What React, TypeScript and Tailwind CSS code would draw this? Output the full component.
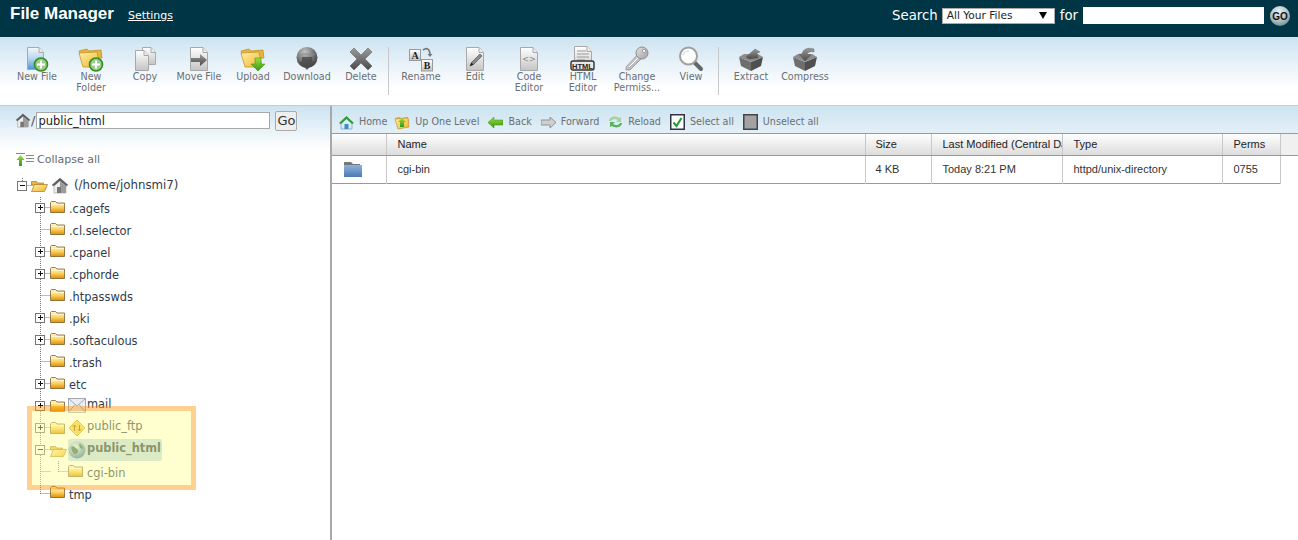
import React from 'react';

const SANS = "font-['DejaVu_Sans',Verdana,sans-serif]";

// Shared gradients for the drawn icons
const IconDefs: React.FC = () => (
  <svg className="absolute h-0 w-0" aria-hidden="true">
    <defs>
      <linearGradient id="folderBody" x1="0" y1="0" x2="0" y2="1">
        <stop offset="0" stopColor="#fff6cc" />
        <stop offset="0.5" stopColor="#fcd668" />
        <stop offset="1" stopColor="#e08e00" />
      </linearGradient>
      <linearGradient id="folderOpen" x1="0" y1="0" x2="1" y2="1">
        <stop offset="0" stopColor="#fff0a8" />
        <stop offset="1" stopColor="#f0b52c" />
      </linearGradient>
      <linearGradient id="blueDoc" x1="0" y1="0" x2="0" y2="1">
        <stop offset="0" stopColor="#f4f8fc" />
        <stop offset="0.5" stopColor="#b9d6f0" />
        <stop offset="1" stopColor="#4b93d6" />
      </linearGradient>
      <linearGradient id="greyDoc" x1="0" y1="0" x2="0" y2="1">
        <stop offset="0" stopColor="#ffffff" />
        <stop offset="1" stopColor="#c4c4c4" />
      </linearGradient>
      <linearGradient id="darkGrey" x1="0" y1="0" x2="0" y2="1">
        <stop offset="0" stopColor="#9a9a9a" />
        <stop offset="1" stopColor="#4a4a4a" />
      </linearGradient>
      <linearGradient id="keyGrey" x1="0" y1="0" x2="1" y2="1">
        <stop offset="0" stopColor="#e4e4e4" />
        <stop offset="1" stopColor="#a0a0a0" />
      </linearGradient>
      <radialGradient id="globeGrey" cx="0.4" cy="0.25" r="0.85">
        <stop offset="0" stopColor="#c4c4c4" />
        <stop offset="0.55" stopColor="#6e6e6e" />
        <stop offset="1" stopColor="#333333" />
      </radialGradient>
      <radialGradient id="globeBlue" cx="0.4" cy="0.3" r="0.8">
        <stop offset="0" stopColor="#d8ecf6" />
        <stop offset="0.6" stopColor="#6f9fc0" />
        <stop offset="1" stopColor="#31658c" />
      </radialGradient>
      <radialGradient id="goBall" cx="0.45" cy="0.3" r="0.8">
        <stop offset="0" stopColor="#eef3f4" />
        <stop offset="0.6" stopColor="#a6bcc2" />
        <stop offset="1" stopColor="#5d7a83" />
      </radialGradient>
      <linearGradient id="greenArrow" x1="0" y1="0" x2="0" y2="1">
        <stop offset="0" stopColor="#a4dc44" />
        <stop offset="1" stopColor="#2f9a12" />
      </linearGradient>
      <linearGradient id="tableFolder" x1="0" y1="0" x2="0" y2="1">
        <stop offset="0" stopColor="#8fb2dc" />
        <stop offset="1" stopColor="#4d79b3" />
      </linearGradient>
    </defs>
  </svg>
);

const PlusBadge: React.FC<{ cx: number; cy: number }> = ({ cx, cy }) => (
  <g>
    <circle cx={cx} cy={cy} r="6.5" fill="#9acb8a" stroke="#2f8f1e" strokeWidth="1.6" />
    <path d={`M${cx - 4} ${cy}h8M${cx} ${cy - 4}v8`} stroke="#fff" strokeWidth="2.2" />
  </g>
);

const DocShape: React.FC<{ x?: number; y?: number; w?: number; h?: number; fill?: string }> = ({
  x = 5,
  y = 1,
  w = 17,
  h = 23,
  fill = 'url(#greyDoc)',
}) => (
  <g>
    <path
      d={`M${x + 0.5} ${y + 0.5}H${x + w - 5}L${x + w - 0.5} ${y + 5.5}V${y + h - 0.5}H${x + 0.5}Z`}
      fill={fill}
      stroke="#a8a8a8"
    />
    <path d={`M${x + w - 5} ${y + 0.5}V${y + 5.5}H${x + w - 0.5}`} fill="#eee" stroke="#a8a8a8" />
  </g>
);

const OpenFolderShape: React.FC = () => (
  <g>
    <path d="M1 5l8-2 2 2 12-1 1 8H4z" fill="#e9b43c" stroke="#b98a1e" strokeWidth=".7" />
    <path d="M1 7l18-1 3 15H5z" fill="url(#folderOpen)" stroke="#c4962a" strokeWidth=".8" />
  </g>
);

const toolbarIcons: Record<string, React.ReactNode> = {
  newFile: (
    <svg width="26" height="26" viewBox="0 0 26 26">
      <DocShape x={3} fill="url(#blueDoc)" />
      <PlusBadge cx={17} cy={18.5} />
    </svg>
  ),
  newFolder: (
    <svg width="26" height="26" viewBox="0 0 26 26">
      <OpenFolderShape />
      <PlusBadge cx={18} cy={18.5} />
    </svg>
  ),
  copy: (
    <svg width="26" height="26" viewBox="0 0 26 26">
      <DocShape x={10} y={1} w={14} h={18} />
      <DocShape x={3} y={4} w={14} h={21} />
    </svg>
  ),
  moveFile: (
    <svg width="26" height="26" viewBox="0 0 26 26">
      <DocShape x={4} y={1} w={18} h={24} />
      <path d="M5 12h9V8l7 6-7 6v-4H5z" fill="url(#darkGrey)" />
    </svg>
  ),
  upload: (
    <svg width="26" height="26" viewBox="0 0 26 26">
      <OpenFolderShape />
      <path d="M15 12h6v6h4l-7 7-7-7h4z" fill="url(#greenArrow)" stroke="#2c8a10" strokeWidth=".5" />
    </svg>
  ),
  download: (
    <svg width="26" height="26" viewBox="0 0 26 26">
      <circle cx="13" cy="11.500" r="10.500" fill="url(#globeGrey)" />
      <path d="M8 11h10v5h3l-8 8-8-8h3z" fill="#4a4a4a" opacity=".8" />
      <path d="M4 8c3 2 6-1 9 0s5 2 8 0" stroke="#8c8c8c" fill="none" />
    </svg>
  ),
  delete: (
    <svg width="26" height="26" viewBox="0 0 26 26">
      <path
        d="M2 6l4-4 7 7 7-7 4 4-7 7 7 7-4 4-7-7-7 7-4-4 7-7z"
        fill="url(#darkGrey)"
        stroke="#666"
        strokeWidth=".6"
      />
    </svg>
  ),
  rename: (
    <svg width="26" height="26" viewBox="0 0 26 26">
      <rect x="1.5" y="3.5" width="11" height="11" fill="url(#greyDoc)" stroke="#999" />
      <text x="7" y="12.5" textAnchor="middle" className="font-['Liberation_Serif',serif] text-[10px] font-bold" fill="#222">
        A
      </text>
      <rect x="13.5" y="13.5" width="11" height="11.5" fill="url(#greyDoc)" stroke="#999" />
      <text x="19" y="23" textAnchor="middle" className="font-['Liberation_Serif',serif] text-[10px] font-bold" fill="#222">
        B
      </text>
      <path d="M15 4c4-3 7-1 7 5" stroke="#777" strokeWidth="1.6" fill="none" />
      <path d="M19.5 8h5l-2.500 3z" fill="#777" />
    </svg>
  ),
  edit: (
    <svg width="26" height="26" viewBox="0 0 26 26">
      <DocShape x={4} y={1} w={18} h={24} />
      <path d="M8 20l1.500-3.500L18 8l2 2-8.500 8.500z" fill="#8a8a8a" stroke="#444" strokeWidth=".6" />
      <path d="M8 20l1.500-3.500 2 2z" fill="#222" />
    </svg>
  ),
  codeEditor: (
    <svg width="26" height="26" viewBox="0 0 26 26">
      <DocShape x={4} y={1} w={18} h={24} />
      <text x="13" y="16" textAnchor="middle" className="font-['DejaVu_Sans',sans-serif] text-[8px]" fill="#888">
        {'<>'}
      </text>
    </svg>
  ),
  htmlEditor: (
    <svg width="26" height="26" viewBox="0 0 26 26">
      <DocShape x={4} y={0} w={18} h={24} />
      <path d="M7 5h9M7 8h12M7 11h12M7 14h8" stroke="#999" />
      <rect x="1" y="15" width="23" height="9" rx="2" fill="#e8e8e8" stroke="#333" strokeWidth="1.400" />
      <text x="12.500" y="22.500" textAnchor="middle" className="font-['Liberation_Sans',sans-serif] text-[7.5px] font-bold" fill="#222">
        HTML
      </text>
    </svg>
  ),
  permissions: (
    <svg width="26" height="26" viewBox="0 0 26 26">
      <path d="M2 24l0-3L13 9l4 4L6 24z" fill="url(#keyGrey)" stroke="#8c8c8c" strokeWidth=".7" />
      <circle cx="18" cy="7" r="6" fill="url(#keyGrey)" stroke="#8c8c8c" />
      <circle cx="20" cy="5" r="1.600" fill="#fff" stroke="#777" strokeWidth=".6" />
      <path d="M5 21l9-9" stroke="#fff" />
    </svg>
  ),
  view: (
    <svg width="26" height="26" viewBox="0 0 26 26">
      <path d="M16 16l7 7" stroke="#666" strokeWidth="4" strokeLinecap="round" />
      <circle cx="10.500" cy="10" r="8.500" fill="#fff" stroke="#a0a0a0" strokeWidth="2" />
      <path d="M5 9c1-3 3-4 6-4" stroke="#ccc" fill="none" />
    </svg>
  ),
  extract: (
    <svg width="26" height="26" viewBox="0 0 26 26">
      <path d="M1 11l12 5v9L3 20z" fill="#6e6e6e" />
      <path d="M25 11l-12 5v9l10-5z" fill="#4f4f4f" />
      <path d="M1 11l5-3 14 0 5 3-12 5z" fill="#8c8c8c" />
      <path d="M8 11l9-8 5 3-3 1 1 5-9 1z" fill="url(#darkGrey)" stroke="#555" strokeWidth=".4" />
    </svg>
  ),
  compress: (
    <svg width="26" height="26" viewBox="0 0 26 26">
      <path d="M1 11l12 5v9L3 20z" fill="#6e6e6e" />
      <path d="M25 11l-12 5v9l10-5z" fill="#4f4f4f" />
      <path d="M1 11l5-3 14 0 5 3-12 5z" fill="#8c8c8c" />
      <path d="M22 3c-6-2-11 0-12 5l-3 0 6 7 6-6-4-1c1-2 4-3 7-2z" fill="url(#darkGrey)" stroke="#555" strokeWidth=".4" />
    </svg>
  ),
};

type ToolItem = { key: string; lines: string[] };

const toolGroups: ToolItem[][] = [
  [
    { key: 'newFile', lines: ['New File'] },
    { key: 'newFolder', lines: ['New', 'Folder'] },
    { key: 'copy', lines: ['Copy'] },
    { key: 'moveFile', lines: ['Move File'] },
    { key: 'upload', lines: ['Upload'] },
    { key: 'download', lines: ['Download'] },
    { key: 'delete', lines: ['Delete'] },
  ],
  [
    { key: 'rename', lines: ['Rename'] },
    { key: 'edit', lines: ['Edit'] },
    { key: 'codeEditor', lines: ['Code', 'Editor'] },
    { key: 'htmlEditor', lines: ['HTML', 'Editor'] },
    { key: 'permissions', lines: ['Change', 'Permiss...'] },
    { key: 'view', lines: ['View'] },
  ],
  [
    { key: 'extract', lines: ['Extract'] },
    { key: 'compress', lines: ['Compress'] },
  ],
];

const Toolbar: React.FC = () => (
  <div className="flex h-[69px] border-b border-[#c3ccd2] bg-gradient-to-b from-[#cde3f1] via-white via-[75%] to-white pl-[10px] pt-[9px]">
    {toolGroups.map((group, i) => (
      <React.Fragment key={i}>
        {i > 0 && <div className="mr-[5px] mt-px h-[48px] w-px bg-[#c8c8c8]" />}
        {group.map((item) => (
          <div key={item.key} className="flex w-[54px] flex-col items-center">
            <div className="mb-[-1px] flex h-[26px] w-[26px] items-center justify-center">{toolbarIcons[item.key]}</div>
            {item.lines.map((line) => (
              <span key={line} className="whitespace-nowrap text-[9.6px] leading-[11px] text-[#6a6f73]">
                {line}
              </span>
            ))}
          </div>
        ))}
      </React.Fragment>
    ))}
  </div>
);

const Header: React.FC = () => (
  <div className="flex h-[37px] items-start bg-[#003545] pl-[10px] pr-[8px] text-white">
    <span className="mt-[4px] font-['Liberation_Sans',Arial,sans-serif] text-[17px] font-bold leading-[20px]">File Manager</span>
    <a className="ml-[14px] mt-[9px] text-[11px] leading-[14px] underline">Settings</a>
    <div className="ml-auto mt-[6px] flex items-start">
      <span className="mt-[2px] text-[13.3px] leading-[16px]">Search</span>
      <div className="relative ml-[4px] mt-[2px] flex h-[16px] w-[113px] items-center border border-[#aaa] bg-white pl-[4px] text-[10.6px] text-[#222]">
        All Your Files
        <span className="absolute right-[7px] top-[3px] h-0 w-0 border-x-[4px] border-t-[7px] border-x-transparent border-t-black" />
      </div>
      <span className="ml-[5px] mt-[2px] text-[13.3px] leading-[16px]">for</span>
      <div className="ml-[5px] mt-px h-[17px] w-[181px] bg-white" />
      <svg className="ml-[6px]" width="20" height="20" viewBox="0 0 20 20">
        <circle cx="10" cy="10" r="10" fill="url(#goBall)" />
        <text x="10" y="13.500" textAnchor="middle" className="font-['Liberation_Sans',sans-serif] text-[10px] font-bold" fill="#111">
          GO
        </text>
      </svg>
    </div>
  </div>
);

const HouseIcon: React.FC<{ size?: number }> = ({ size = 18 }) => (
  <svg width={size} height={size} viewBox="0 0 18 18">
    <path d="M1 9l8-7 8 7-2 1v7H3v-7z" fill="#eee" stroke="#999" strokeWidth=".6" />
    <path d="M1 9l8-7 8 7-2 1-6-5-6 5z" fill="#5e5e5e" />
    <path d="M9 5l6 5v7H9z" fill="#9c9c9c" />
    <rect x="6" y="11" width="4" height="6" fill="#777" />
  </svg>
);

const PathBar: React.FC = () => (
  <div className="flex h-[44px] items-start bg-gradient-to-b from-[#cde3f1] to-white pl-[15px] pt-[5px]">
    <div className="mt-[1px]">
      <HouseIcon size={16} />
    </div>
    <span className="mt-[1px] text-[13px] leading-[17px] text-[#555]">/</span>
    <div className="ml-[1px] mt-[1px] flex h-[17px] w-[234px] items-center border border-[#a9a9a9] bg-white pl-[1px] pt-[2px] text-[11.5px] text-[#222]">
      public_html
    </div>
    <div className="ml-[5px] flex h-[20px] w-[22px] items-center justify-center rounded-[2px] border border-[#aaa] bg-[#eeeeee] text-[13px] text-[#333]">
      Go
    </div>
  </div>
);

const FolderIcon: React.FC<{ open?: boolean }> = ({ open }) =>
  open ? (
    <svg width="17" height="13" viewBox="0 0 17 13">
      <path d="M.5 2.500h5l1 1.500h6v2H.5z" fill="#e7b64a" stroke="#a77b1e" strokeWidth=".7" />
      <path d="M.5 12.500l3-7h13l-3 7z" fill="url(#folderOpen)" stroke="#a77b1e" strokeWidth=".7" />
    </svg>
  ) : (
    <svg width="15" height="12" viewBox="0 0 15 12">
      <path d="M.5 1.500l1-1h4l1.500 1.500h7.500v9.500H.5z" fill="url(#folderBody)" stroke="#7d6030" strokeWidth=".8" />
      <path d="M1 3.500h13" stroke="#fff6cc" />
    </svg>
  );

// Dotted tree line plus the optional +/- box
const Connector: React.FC<{ toggle?: '+' | '-'; last?: boolean; first?: boolean; x?: number }> = ({
  toggle,
  last,
  first,
  x = 11,
}) => (
  <svg width="22" height="22" viewBox="0 0 22 22" className="shrink-0">
    <path
      d={`M${x + 0.5} ${first ? 3 : 0}V${last ? 11 : 22}M${x + 0.5} 10.500H22`}
      stroke="#777"
      strokeDasharray="1 1"
      fill="none"
    />
    {toggle && (
      <g>
        <rect x={x - 4.5} y="6.500" width="9" height="9" fill="#fff" stroke="#777" />
        <path d={`M${x - 2} 10.500h5${toggle === '+' ? `M${x + 0.5} 8v5` : ''}`} stroke="#111" />
      </g>
    )}
  </svg>
);

const MailIcon = () => (
  <svg width="18" height="17" viewBox="0 0 18 17" className="shrink-0">
    <rect x=".5" y="1.500" width="17" height="14" fill="#e8eef6" stroke="#a4a9b4" />
    <path d="M.5 1.500L9 9l8.500-7.500M.5 15.500L7 7.500M17.500 15.500L11 7.500" stroke="#a4a9b4" fill="none" />
  </svg>
);

const FtpIcon = () => (
  <svg width="18" height="18" viewBox="0 0 18 18" className="shrink-0">
    <path d="M9 1l8 8-8 8-8-8z" fill="#f7c93a" stroke="#d8a21e" />
    <path d="M6.500 12V6M4.800 7.800L6.500 6l1.700 1.800M11.500 6v6M9.800 10.200l1.700 1.800 1.700-1.800" stroke="#8a5a10" fill="none" />
  </svg>
);

const GlobeIcon = () => (
  <svg width="18" height="18" viewBox="0 0 18 18" className="shrink-0">
    <circle cx="9" cy="9" r="8.500" fill="url(#globeBlue)" />
    <path d="M3 6c3-2 4 1 6 2s1 4-1 5-4-2-5-7zM11 3c2 0 4 2 4 5-2 0-4-2-4-5z" fill="#3f6a55" />
  </svg>
);

type TreeRow = {
  label: string;
  toggle?: '+';
};

const topRows: TreeRow[] = [
  { label: '.cagefs', toggle: '+' },
  { label: '.cl.selector' },
  { label: '.cpanel', toggle: '+' },
  { label: '.cphorde', toggle: '+' },
  { label: '.htpasswds' },
  { label: '.pki', toggle: '+' },
  { label: '.softaculous', toggle: '+' },
  { label: '.trash' },
  { label: 'etc', toggle: '+' },
];

const TREE_TEXT = 'text-[11.4px] leading-[22px] text-[#2f3b4a] whitespace-nowrap';

const Tree: React.FC = () => (
  <div className="relative ml-[29px]">
    {/* Root row */}
    <div className="flex h-[22px] items-center -ml-[18px]">
      <Connector toggle="-" first last />
      <div className="-ml-[2px] mr-[3px] mt-[-2px] flex">
        <FolderIcon open />
      </div>
      <div className="mr-[5px] mt-[-2px]">
        <HouseIcon />
      </div>
      <span className="-mt-[3px] whitespace-nowrap text-[11.8px] leading-[22px] text-[#2f3b4a]">(/home/johnsmi7)</span>
    </div>

    {topRows.map((row) => (
      <div key={row.label} className="flex h-[22px] items-center">
        <Connector toggle={row.toggle} />
        <div className="mr-[3px] mt-[-2px] -ml-px flex">
          <FolderIcon />
        </div>
        <span className={`ml-px mt-[2px] ${TREE_TEXT}`}>{row.label}</span>
      </div>
    ))}

    {/* Rows with a service icon sit their label a little higher */}
    <div className="flex h-[22px] items-center">
      <Connector toggle="+" />
      <div className="-ml-px mr-[3px] flex">
        <FolderIcon />
      </div>
      <div className="-mt-px">
        <MailIcon />
      </div>
      <span className={`ml-px -mt-[4px] ${TREE_TEXT}`}>mail</span>
    </div>
    <div className="flex h-[22px] items-center">
      <Connector toggle="+" />
      <div className="-ml-px mr-[3px] flex">
        <FolderIcon />
      </div>
      <FtpIcon />
      <span className={`ml-px -mt-[5px] ${TREE_TEXT}`}>public_ftp</span>
    </div>
    <div className="flex h-[22px] items-center">
      <Connector toggle="-" />
      <div className="-ml-px mr-[1px] flex">
        <FolderIcon open />
      </div>
      <div className="flex h-[22px] items-center rounded-[2px] bg-[#bfdbec] pr-px">
        <GlobeIcon />
        <span className={`ml-px -mt-[5px] font-bold ${TREE_TEXT}`}>public_html</span>
      </div>
    </div>
    <div className="flex h-[22px] items-center">
      <Connector />
      <Connector last x={7} />
      <div className="-ml-[5px] mr-[3px] mt-[-2px] flex">
        <FolderIcon />
      </div>
      <span className={`ml-px mt-[2px] ${TREE_TEXT}`}>cgi-bin</span>
    </div>
    <div className="flex h-[22px] items-center">
      <Connector last />
      <div className="-ml-px mr-[3px] mt-[-4px] flex">
        <FolderIcon />
      </div>
      <span className={`ml-px mt-[1px] ${TREE_TEXT}`}>tmp</span>
    </div>

    {/* Tutorial highlight lying over the tree */}
    <div className="absolute left-[-2px] top-[231px] h-[84px] w-[169px] border-[5px] border-[#ff9707]/45 bg-[#ffff96]/45 bg-clip-padding" />
  </div>
);

const LeftPanel: React.FC = () => (
  <div className="w-[332px] shrink-0 border-r-2 border-[#a8a8a8]">
    <PathBar />
    <div className="ml-[16px] mt-px flex h-[18px] items-center">
      <svg width="18" height="14" viewBox="0 0 18 14" className="shrink-0">
        <path d="M0 .5h9M10 5.500h8M10 8.500h8M10 2.500h8" stroke="#888" />
        <path d="M4.500 2l4 5H6v6H3V7H.5z" fill="url(#greenArrow)" />
      </svg>
      <span className="ml-[3px] text-[11px] text-[#666b70]">Collapse all</span>
    </div>
    <div className="h-[6px]" />
    <Tree />
  </div>
);

const navIcons: Record<string, React.ReactNode> = {
  Home: (
    <svg width="15" height="15" viewBox="0 0 15 15">
      <path d="M2 8v6h11V8L7.500 3z" fill="#dcebf6" stroke="#6f8fa8" strokeWidth=".6" />
      <path d="M0 8l7.500-7L15 8l-2 1-5.500-5L2 9z" fill="#2e9a3a" />
      <rect x="5.500" y="9" width="4" height="5" fill="#3d8ccc" />
    </svg>
  ),
  'Up One Level': (
    <svg width="16" height="15" viewBox="0 0 16 15">
      <path d="M1 3l5-1 1 1 7-1 1 5H2z" fill="#e0ad30" />
      <path d="M1 4l13-1 1 9-11 2z" fill="url(#folderOpen)" stroke="#b98a1e" strokeWidth=".6" />
      <path d="M8 3l4 4h-2v5H6V7H4z" fill="url(#greenArrow)" />
    </svg>
  ),
  Back: (
    <svg width="15" height="11" viewBox="0 0 15 11">
      <path d="M0 5.500L6 0v3h9v5H6v3z" fill="url(#greenArrow)" stroke="#3a8a18" strokeWidth=".5" />
    </svg>
  ),
  Forward: (
    <svg width="15" height="11" viewBox="0 0 15 11">
      <path d="M15 5.500L9 0v3H0v5h9v3z" fill="#cfcfcf" stroke="#777" strokeWidth=".7" />
    </svg>
  ),
  Reload: (
    <svg width="15" height="14" viewBox="0 0 15 14">
      <path d="M1 6c0-4 6-6 10-3l2-1v5H8l2-2C7 3 4 4 3 6z" fill="#a9d0a0" />
      <path d="M14 8c0 4-6 6-10 3l-2 1V7h5L5 9c3 2 6 1 7-1z" fill="#58b25c" />
    </svg>
  ),
  'Select all': (
    <svg width="15" height="16" viewBox="0 0 15 16">
      <rect x=".75" y=".75" width="13.500" height="14.500" fill="#fff" stroke="#334" strokeWidth="1.500" />
      <path d="M3.500 8.500l3 3.500 5-8" stroke="#1d9a33" strokeWidth="2" fill="none" />
    </svg>
  ),
  'Unselect all': (
    <svg width="15" height="16" viewBox="0 0 15 16">
      <rect x=".75" y=".75" width="13.500" height="14.500" fill="#a3a3a3" stroke="#444" strokeWidth="1.500" />
    </svg>
  ),
};

const NavBar: React.FC = () => (
  <div className="flex h-[28px] items-start gap-[9px] border-b border-[#999] bg-gradient-to-b from-[#cde3f1] to-[#e4f0f7] pl-[7px] pt-[8px]">
    {Object.entries(navIcons).map(([label, icon]) => (
      <div key={label} className="flex items-center gap-[5px] first:-mr-[2px]">
        <span className="flex h-[16px] items-center">{icon}</span>
        <span className="whitespace-nowrap text-[9.6px] text-[#6a6f73]">{label}</span>
      </div>
    ))}
  </div>
);

const columns = [
  { label: '', width: 'w-[54px]', pad: 'pl-[11px]' },
  { label: 'Name', width: 'w-[479px]', pad: 'pl-[11px]' },
  { label: 'Size', width: 'w-[66px]', pad: 'pl-[10px]' },
  { label: 'Last Modified (Central Daylight Time)', width: 'w-[131px]', pad: 'pl-[11px]' },
  { label: 'Type', width: 'w-[160px]', pad: 'pl-[11px]' },
  { label: 'Perms', width: 'w-[58px]', pad: 'pl-[11px]' },
];

const FileTable: React.FC = () => (
  <div className="font-['Liberation_Sans',Arial,sans-serif] text-[11px] text-[#333]">
    <div className="h-[22px] border-b border-[#999] bg-[#f0f0f0]">
      <table className="w-[948px] table-fixed border-collapse">
        <thead>
          <tr className="h-[21px] bg-gradient-to-b from-white to-[#dcdcdc]">
            {columns.map((col, i) => (
              <th
                key={i}
                className={`${col.width} ${col.pad} overflow-hidden whitespace-nowrap border-r border-[#c8c8c8] text-left font-normal text-[#222]`}
              >
                {col.label}
              </th>
            ))}
          </tr>
        </thead>
      </table>
    </div>
    <table className="w-[948px] table-fixed border-collapse border-b border-[#999]">
      <tbody>
        <tr className="h-[27px]">
          <td className="w-[54px] border-r border-[#c8c8c8] pl-[12px]">
            <svg width="18" height="16" viewBox="0 0 18 16" className="block">
              <path d="M0 1h7l2 2h7v3H0z" fill="#777" />
              <path d="M0 4h18v12H0z" fill="url(#tableFolder)" />
            </svg>
          </td>
          <td className="w-[479px] border-r border-[#c8c8c8] pl-[11px]">cgi-bin</td>
          <td className="w-[66px] border-r border-[#c8c8c8] pl-[10px]">4 KB</td>
          <td className="w-[131px] border-r border-[#c8c8c8] pl-[11px]">Today 8:21 PM</td>
          <td className="w-[160px] border-r border-[#c8c8c8] pl-[11px]">httpd/unix-directory</td>
          <td className="w-[58px] border-r border-[#c8c8c8] pl-[11px]">0755</td>
        </tr>
      </tbody>
    </table>
  </div>
);

const App: React.FC = () => (
  <div className={`h-[540px] overflow-hidden bg-white ${SANS}`}>
    <IconDefs />
    <Header />
    <Toolbar />
    <div className="flex h-[434px]">
      <LeftPanel />
      <div className="min-w-0 flex-1">
        <NavBar />
        <FileTable />
      </div>
    </div>
  </div>
);

export default App;
